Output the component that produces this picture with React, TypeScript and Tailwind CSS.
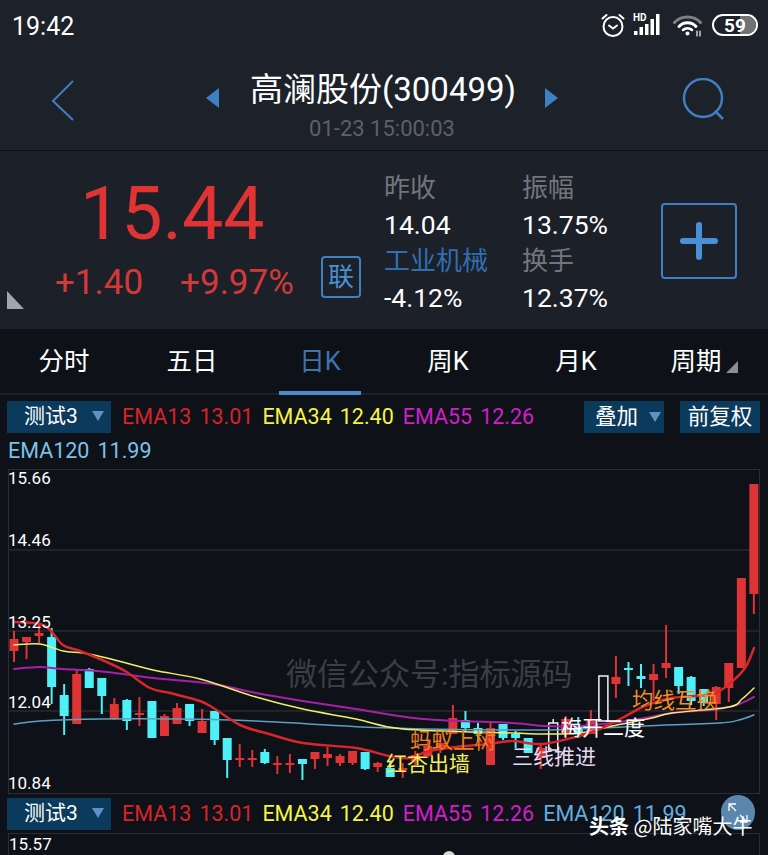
import React from 'react';

type Candle = [number, number, number, number, 'r' | 'c' | 'w'];

// top, bottom, wick top, wick bottom (page y), kind
const candles: Candle[] = [
  [638, 650, 630, 661, 'r'], [636, 641, 636, 658, 'r'], [632, 635, 623, 642, 'r'], [636, 686, 627, 703, 'c'],
  [694, 715, 683, 734, 'c'], [673, 723, 668, 723, 'r'], [668, 687, 667, 687, 'c'], [677, 695, 677, 713, 'c'],
  [703, 718, 697, 719, 'r'], [699, 720, 698, 729, 'c'], [712, 713, 696, 725, 'r'], [700, 737, 700, 737, 'c'],
  [715, 735, 713, 735, 'r'], [707, 723, 702, 723, 'r'], [703, 720, 703, 725, 'c'], [720, 732, 708, 732, 'r'],
  [710, 739, 710, 744, 'c'], [737, 759, 737, 777, 'c'], [757, 758, 743, 766, 'r'], [757, 758, 749, 766, 'r'],
  [751, 762, 748, 763, 'c'], [762, 764, 755, 773, 'r'], [762, 763, 753, 772, 'r'], [758, 763, 758, 779, 'c'],
  [751, 758, 751, 768, 'r'], [753, 757, 746, 765, 'r'], [755, 762, 753, 765, 'r'], [750, 762, 750, 764, 'r'],
  [751, 768, 751, 769, 'c'], [762, 766, 761, 771, 'r'], [767, 776, 760, 776, 'c'], [767, 769, 762, 777, 'r'],
  [754, 760, 750, 764, 'r'], [745, 755, 738, 757, 'r'], [742, 746, 735, 752, 'r'], [717, 733, 704, 733, 'r'],
  [719, 727, 710, 730, 'c'], [727, 733, 722, 740, 'c'], [727, 764, 722, 764, 'r'], [723, 737, 723, 739, 'c'],
  [733, 737, 730, 747, 'c'], [737, 752, 737, 752, 'c'], [747, 757, 743, 768, 'r'], [722, 749, 718, 749, 'w'],
  [718, 733, 715, 737, 'r'], [724, 732, 716, 737, 'c'], [720, 733, 709, 733, 'r'], [675, 720, 675, 720, 'w'],
  [676, 683, 655, 697, 'r'], [667, 669, 661, 685, 'c'], [675, 678, 663, 687, 'c'], [673, 679, 663, 700, 'r'],
  [662, 667, 624, 677, 'r'], [666, 685, 666, 693, 'c'], [676, 700, 675, 704, 'c'], [688, 702, 688, 705, 'c'],
  [686, 703, 685, 719, 'r'], [662, 687, 662, 701, 'r'], [577, 667, 577, 667, 'r'], [483, 593, 483, 613, 'r'],
];

const lines: { color: string; width: number; pts: string }[] = [
  {
    color: '#5f9fc4',
    width: 1.5,
    pts: '14,723 40,720 100,718 180,718 256,720 389,727 512,729 579,728 645,725 719,722 739,719 754,714',
  },
  {
    color: '#a81fa8',
    width: 2,
    pts: '14,668 40,666 63,668 107,671 153,677 213,683 256,692 303,700 356,708 423,718 512,722 545,725 579,725 612,722 645,717 672,712 719,708 739,703 754,696',
  },
  {
    color: '#eef06a',
    width: 1.5,
    pts: '14,644 40,643 63,650 83,652 107,657 153,669 200,678 256,696 303,708 356,718 403,728 512,732 545,733 579,732 612,725 652,717 672,712 729,706 742,698 754,687',
  },
  {
    color: '#d8262b',
    width: 2.5,
    pts: '14,621 40,623 51,630 63,644 80,650 100,658 125,670 150,687 170,692 200,700 215,708 240,724 269,733 303,742 356,747 389,755 409,757 429,750 456,746 489,743 512,740 542,743 579,735 602,727 622,717 645,705 672,697 712,693 729,683 745,667 754,647',
  },
];

// smooth the moving average through its points
const toPath = (pts: string) => {
  const p = pts.split(' ').map((s) => s.split(',').map(Number));
  let d = `M${p[0][0]} ${p[0][1]}`;
  for (let i = 0; i < p.length - 1; i++) {
    const a = p[Math.max(i - 1, 0)];
    const b = p[i];
    const c = p[i + 1];
    const e = p[Math.min(i + 2, p.length - 1)];
    d += ` C${b[0] + (c[0] - a[0]) / 6} ${b[1] + (c[1] - a[1]) / 6} ${c[0] - (e[0] - b[0]) / 6} ${c[1] - (e[1] - b[1]) / 6} ${c[0]} ${c[1]}`;
  }
  return d;
};

const labels = [
  { text: '15.66', cls: 'top-[-2px]' },
  { text: '14.46', cls: 'top-[60px]' },
  { text: '13.25', cls: 'top-[142px]' },
  { text: '12.04', cls: 'top-[222px]' },
  { text: '10.84', cls: 'top-[303px]' },
];

const tabs = ['分时', '五日', '日K', '周K', '月K', '周期'];

const Triangle = ({ dir }: { dir: 'l' | 'r' }) => (
  <svg width="13" height="20" viewBox="0 0 13 20" className="mt-[18px]">
    <path d={dir === 'l' ? 'M13 0V20L0 10Z' : 'M0 0V20L13 10Z'} fill="#3f7fc4" />
  </svg>
);

const IndicatorButton = () => (
  <div className="w-[104px] h-[32px] bg-[#0b3a5c] flex items-center pl-[17px] text-[21px] text-white shrink-0">
    <span>测试3</span>
    <svg width="12" height="10" viewBox="0 0 12 10" className="ml-[14px] mb-[2px]">
      <path d="M0 0H12L6 10Z" fill="#5b93c7" />
    </svg>
  </div>
);

const EmaPair = ({ name, value, cls }: { name: string; value: string; cls: string }) => (
  <div className={`flex gap-[8px] ${cls}`}>
    <span>{name}</span>
    <span>{value}</span>
  </div>
);

const EmaValues = ({ full }: { full?: boolean }) => (
  <div className="flex text-[21.5px] leading-[32px] ml-[11px] gap-[9px] whitespace-nowrap">
    <EmaPair name="EMA13" value="13.01" cls="text-[#d8232a]" />
    <EmaPair name="EMA34" value="12.40" cls="text-[#f5f542]" />
    <EmaPair name="EMA55" value="12.26" cls="text-[#d11fc9]" />
    {full && <EmaPair name="EMA120" value="11.99" cls="text-[#62aede]" />}
  </div>
);

const StatusIcons = () => (
  <div className="flex items-center">
    <svg width="26" height="26" viewBox="0 0 26 26" fill="none" stroke="white" strokeWidth="2" strokeLinecap="round">
      <circle cx="13" cy="14.5" r="9.5" />
      <path d="M9 13.5l4 3 4-3M2.5 6.5l4-3.5M23.5 6.5l-4-3.5" />
    </svg>
    <div className="relative ml-[7px] w-[30px] h-[24px]">
      <svg width="30" height="24" viewBox="0 0 30 24" fill="white" className="block">
        <rect x="1" y="18" width="3.5" height="4" />
        <rect x="6.5" y="14" width="3.5" height="8" />
        <rect x="12" y="11" width="3.5" height="11" />
        <rect x="17.5" y="6" width="3.5" height="16" />
        <rect x="23" y="1" width="3.5" height="21" />
      </svg>
      <span className="absolute left-0 top-[0px] text-[10px] leading-[10px] font-bold text-white">HD</span>
    </div>
    <svg width="30" height="24" viewBox="0 0 30 24" className="ml-[10px]" fill="none" strokeLinecap="round">
      <path d="M1.5 9.5C8 2 21 2 27.5 9.5" stroke="#7d8086" strokeWidth="3" />
      <path d="M6 13.5C10.5 8.5 18.5 8.5 23 13.5" stroke="white" strokeWidth="3" />
      <path d="M10 17C12.5 14.5 16.5 14.5 19 17" stroke="white" strokeWidth="2.5" />
      <circle cx="14.5" cy="20.5" r="2" fill="white" />
      <path d="M24 18v5M27 18v5" stroke="white" strokeWidth="1.2" />
    </svg>
    <div className="ml-[9px] w-[46px] h-[22px] rounded-full border-2 border-white relative overflow-hidden flex items-center justify-center">
      <div className="absolute inset-y-0 left-[26px] right-0 bg-[#6f7277]" />
      <span className="relative text-[19px] font-bold leading-none text-white">59</span>
    </div>
  </div>
);

const App: React.FC = () => {
  return (
    <div className="relative h-[855px] w-[768px] overflow-hidden bg-[#0e1118] text-white font-['Roboto','Noto_Sans_CJK_SC',sans-serif]">
      {/* Header */}
      <header className="h-[150px] bg-[#1d2129]">
        <div className="h-[52px] flex items-center justify-between pl-[12px] pr-[10px]">
          <span className="text-[25px] mt-[2px]">19:42</span>
          <div className="mb-[2px]">
            <StatusIcons />
          </div>
        </div>
        <div className="flex justify-between pl-[50px] pr-[42px]">
          <svg width="26" height="44" viewBox="0 0 26 44" fill="none" className="mt-[27px] mr-[6px]">
            <path d="M23 2L3 22L23 41" stroke="#3f7fc4" strokeWidth="2" />
          </svg>
          <div className="flex flex-col items-center">
            <div className="flex pt-[18px]">
              <Triangle dir="l" />
              <span className="text-[33px] leading-[40px] text-white ml-[31px] mr-[29px]">高澜股份(300499)</span>
              <Triangle dir="r" />
            </div>
            <span className="text-[22px] leading-[28px] mt-[5px] text-[#5d6066]">01-23 15:00:03</span>
          </div>
          <svg width="44" height="44" viewBox="0 0 44 44" fill="none" className="mt-[26px]">
            <circle cx="21" cy="20" r="19" stroke="#3f7fc4" strokeWidth="2.5" />
            <path d="M33 33L41 41" stroke="#3f7fc4" strokeWidth="2.5" />
          </svg>
        </div>
      </header>

      {/* Quote */}
      <section className="relative h-[179px] border-t border-[#0c0e13] bg-[#1c2028] flex">
        <div className="w-[321px] pl-[55px] flex flex-col">
          <div className="text-[73.5px] leading-[84px] mt-[21px] ml-[25px] text-[#df3334]">15.44</div>
          <div className="flex gap-[37px] text-[35px] leading-[40px] mt-[7px] text-[#d23a3a] whitespace-nowrap">
            <span>+1.40</span>
            <span>+9.97%</span>
          </div>
        </div>
        <div className="w-[40px] h-[42px] mt-[105px] rounded-[4px] border-2 border-[#3f7fc4] flex items-center justify-center text-[26px] text-[#4a90d0]">
          联
        </div>
        <div className="ml-[23px] mt-[19px] w-[238px] grid grid-cols-[138px_100px] grid-rows-[36.5px_36.5px_36.5px_36.5px] items-center text-[26.5px] whitespace-nowrap">
          <span className="text-[#72767c] text-[26px]">昨收</span>
          <span className="text-[#72767c] text-[26px]">振幅</span>
          <span>14.04</span>
          <span>13.75%</span>
          <span className="text-[#2f6fb0] text-[26px]">工业机械</span>
          <span className="text-[#72767c] text-[26px]">换手</span>
          <span>-4.12%</span>
          <span>12.37%</span>
        </div>
        <div className="ml-[39px] mt-[52px] w-[76px] h-[76px] rounded-[4px] border-2 border-[#3f7fc4] flex items-center justify-center">
          <svg width="38" height="38" viewBox="0 0 38 38">
            <path d="M19 3V35M3 19H35" stroke="#4a90d8" strokeWidth="6" strokeLinecap="round" />
          </svg>
        </div>
        <svg width="17" height="18" viewBox="0 0 17 18" className="absolute left-[7px] top-[140px]">
          <path d="M0 0L17 18H0Z" fill="#a2a5a9" />
        </svg>
      </section>

      {/* Period tabs */}
      <nav className="h-[65px] grid grid-cols-6 border-b-2 border-[#1c222c] bg-[#0e1118] mt-[1px]">
        {tabs.map((t, i) => (
          <div key={t} className="relative flex items-center justify-center text-[25.5px]">
            <span className={i === 2 ? 'text-[#3f74ad]' : 'text-white'}>{t}</span>
            {i === 2 && <div className="absolute bottom-[-2px] left-[23px] w-[82px] h-[4px] bg-[#4f8ac9]" />}
            {i === 5 && (
              <svg width="12" height="12" viewBox="0 0 12 12" className="ml-[4px] mt-[10px]">
                <path d="M12 0V12H0Z" fill="#8b8e92" />
              </svg>
            )}
          </div>
        ))}
      </nav>

      {/* Indicator bar */}
      <div className="pl-[7px] pr-[8px] pt-[6px]">
        <div className="flex">
          <IndicatorButton />
          <EmaValues />
          <div className="ml-auto flex gap-[16px] text-[21.5px] text-white">
            <div className="w-[80px] h-[32px] bg-[#0b3a5c] flex items-center pl-[11px] gap-[11px]">
              <span>叠加</span>
              <svg width="12" height="10" viewBox="0 0 12 10">
                <path d="M0 0H12L6 10Z" fill="#5b93c7" />
              </svg>
            </div>
            <div className="w-[80px] h-[32px] bg-[#0b3a5c] flex items-center justify-center">前复权</div>
          </div>
        </div>
        <div className="flex gap-[8px] text-[21.5px] leading-[30px] mt-[3px] ml-[1px] text-[#7cc1e8]">
          <span>EMA120</span>
          <span>11.99</span>
        </div>
      </div>

      {/* Main chart */}
      <div className="relative mx-[8px] mt-[3px] h-[325px] border border-[#2a2d33]">
        <svg width="750" height="323" viewBox="9 469 750 323" className="block">
          {[549, 630, 710].map((y) => (
            <line key={y} x1="8" x2="760" y1={y} y2={y} stroke="#33363b" strokeWidth="1" />
          ))}
          {candles.map(([top, bot, wt, wb, kind], i) => {
            const x = 14 + i * 12.54;
            const color = kind === 'r' ? '#df3336' : kind === 'c' ? '#4df0f7' : '#f4f4f4';
            if (kind === 'w') {
              return (
                <g key={i}>
                  <line x1={x} x2={x} y1={wt} y2={top} stroke={color} strokeWidth="1.5" />
                  <rect x={x - 4.5} y={top} width="9" height={bot - top} fill="#0e1118" stroke={color} strokeWidth="1.5" />
                </g>
              );
            }
            return (
              <g key={i}>
                <line x1={x} x2={x} y1={wt} y2={wb} stroke={color} strokeWidth="2" />
                <rect x={x - 4.5} y={top} width="9" height={Math.max(bot - top, 2)} fill={color} />
              </g>
            );
          })}
          {lines.map((l) => (
            <path key={l.color} d={toPath(l.pts)} fill="none" stroke={l.color} strokeWidth={l.width} strokeLinecap="round" />
          ))}
        </svg>
        {labels.map((l) => (
          <span key={l.text} className={`absolute left-[-1px] text-[17px] leading-[20px] ${l.cls}`}>
            {l.text}
          </span>
        ))}
        <span className="absolute left-[277px] top-[185px] text-[31px] leading-[40px] text-[#3b3e43] whitespace-nowrap">微信公众号:指标源码</span>
        <span className="absolute left-[401px] top-[256px] text-[21.5px] leading-[30px] text-[#ee7f1c] whitespace-nowrap">蚂蚁上树</span>
        <span className="absolute left-[377px] top-[279px] text-[21px] leading-[30px] text-[#f5ef5a] whitespace-nowrap">红杏出墙</span>
        <span className="absolute left-[503px] top-[272px] text-[21px] leading-[30px] text-[#e6dcf2] whitespace-nowrap">三线推进</span>
        <span className="absolute left-[552px] top-[243px] text-[21px] leading-[30px] text-white whitespace-nowrap">梅开二度</span>
        <span className="absolute left-[623px] top-[216px] text-[21.5px] leading-[30px] text-[#ee8f23] whitespace-nowrap">均线互换</span>
      </div>

      {/* Second chart */}
      <div className="flex pl-[7px] pt-[4px]">
        <IndicatorButton />
        <EmaValues full />
      </div>
      <div className="mx-[8px] mt-[3px] h-[40px] border-t border-x border-[#2a2d33] text-[17px] leading-[20px]">15.57</div>

      {/* Overlays */}
      <div className="absolute left-[721px] top-[795px] w-[34px] h-[35px] rounded-full bg-[#5a87ab] flex items-center justify-center">
        <svg width="24" height="24" viewBox="0 0 24 24" fill="none" stroke="white" strokeWidth="1.3">
          <path d="M3 10V3H10M3 3L10 10M21 14V21H14M21 21L14 14" />
        </svg>
      </div>
      <div className="absolute left-[589px] top-[812px] text-[20px] leading-[28px] text-white whitespace-nowrap font-['Noto_Sans_CJK_SC',sans-serif]">
        <span className="font-bold">头条</span> @陆家嘴大牛
      </div>
      <div className="absolute left-[443px] top-[851px] w-[12px] h-[12px] rounded-full bg-[#d8d8d8]" />
    </div>
  );
};

export default App;
